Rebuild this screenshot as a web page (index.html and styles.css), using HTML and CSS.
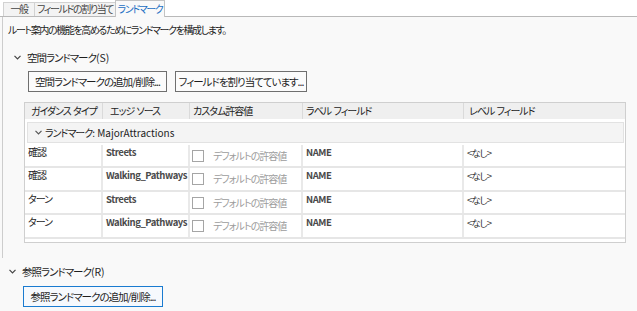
FILE: index.html
```html
<!DOCTYPE html>
<html lang="ja">
<head>
    <meta charset="UTF-8">
    <title>ランドマーク</title>
    <link rel="stylesheet" href="styles.css">
</head>
<body>

    <!-- Tab strip -->
    <div class="tabs">
        <div class="tab tab-general">一般</div>
        <div class="tab tab-fields">フィールドの割り当て</div>
        <div class="tab tab-landmark active">ランドマーク</div>
    </div>

    <!-- Spatial landmarks -->
    <div class="panel">
        <p class="desc">ルート案内の機能を高めるためにランドマークを構成します。</p>

        <div class="section-head">
            <svg class="chev" width="7" height="5" viewBox="0 0 7 5"><path d="M0.5 0.8 L3.5 3.8 L6.5 0.8" fill="none" stroke="#444" stroke-width="1.2"/></svg>
            <span>空間ランドマーク<span class="latin">(S)</span></span>
        </div>

        <div class="btn-row">
            <button class="btn btn-add">空間ランドマークの追加/削除...</button>
            <button class="btn btn-assign">フィールドを割り当てています...</button>
        </div>

        <div class="grid">
            <div class="grid-head">
                <div class="hcell">ガイダンス タイプ</div>
                <div class="hcell">エッジ ソース</div>
                <div class="hcell">カスタム許容値</div>
                <div class="hcell">ラベル フィールド</div>
                <div class="hcell">レベル フィールド</div>
            </div>

            <div class="group-row">
                <svg class="chev" width="7" height="5" viewBox="0 0 7 5"><path d="M0.5 0.8 L3.5 3.8 L6.5 0.8" fill="none" stroke="#555" stroke-width="1.2"/></svg>
                <span>ランドマーク<span class="latin">: MajorAttractions</span></span>
            </div>

            <div class="grid-row">
                <div class="cell">確認</div>
                <div class="cell strong latin">Streets</div>
                <div class="cell check-cell"><span class="checkbox"></span><span class="muted">デフォルトの許容値</span></div>
                <div class="cell strong latin">NAME</div>
                <div class="cell small">&lt;なし&gt;</div>
            </div>
            <div class="grid-row tall">
                <div class="cell">確認</div>
                <div class="cell strong latin">Walking_Pathways</div>
                <div class="cell check-cell"><span class="checkbox"></span><span class="muted">デフォルトの許容値</span></div>
                <div class="cell strong latin">NAME</div>
                <div class="cell small">&lt;なし&gt;</div>
            </div>
            <div class="grid-row">
                <div class="cell">ターン</div>
                <div class="cell strong latin">Streets</div>
                <div class="cell check-cell"><span class="checkbox"></span><span class="muted">デフォルトの許容値</span></div>
                <div class="cell strong latin">NAME</div>
                <div class="cell small">&lt;なし&gt;</div>
            </div>
            <div class="grid-row tall">
                <div class="cell">ターン</div>
                <div class="cell strong latin">Walking_Pathways</div>
                <div class="cell check-cell"><span class="checkbox"></span><span class="muted">デフォルトの許容値</span></div>
                <div class="cell strong latin">NAME</div>
                <div class="cell small">&lt;なし&gt;</div>
            </div>
        </div>
    </div>

    <!-- Reference landmarks -->
    <div class="section-ref">
        <div class="section-head">
            <svg class="chev" width="7" height="5" viewBox="0 0 7 5"><path d="M0.5 0.8 L3.5 3.8 L6.5 0.8" fill="none" stroke="#444" stroke-width="1.2"/></svg>
            <span>参照ランドマーク<span class="latin">(R)</span></span>
        </div>
        <div class="btn-row">
            <button class="btn btn-ref focused">参照ランドマークの追加/削除...</button>
        </div>
    </div>

</body>
</html>
```

FILE: styles.css
```css
body {
    margin: 0;
    padding: 0;
    font-family: "Noto Sans CJK JP", "Noto Sans", sans-serif;
    font-feature-settings: "palt";
    font-size: 10px;
    letter-spacing: -1px;
    word-spacing: 1px;
    white-space: nowrap;
    color: #1e1e1e;
    background-color: #f9f9f9;
    height: 311px;
    overflow: hidden;
}

.latin {
    letter-spacing: 0;
    word-spacing: 0;
}

/* Tabs */
.tabs {
    display: flex;
    align-items: flex-end;
    height: 16px;
    padding-left: 3px;
    background-color: #ffffff;
    border-bottom: 1px solid #b9b9b9;
}

.tab {
    box-sizing: border-box;
    height: 14px;
    line-height: 12px;
    text-align: center;
    letter-spacing: -1.4px;
    color: #444;
    background-color: #f3f3f3;
    border: 1px solid #d2d2d2;
    border-right: none;
    border-bottom: none;
}

.tab-general { width: 31px; }
.tab-fields { width: 81px; }
.tab-landmark { width: 50px; }

.tab.active {
    height: 17px;
    line-height: 15px;
    margin-bottom: -1px;
    color: #1b6ec2;
    background-color: #f9f9f9;
    border-color: #c4c4c4;
    border-right: 1px solid #c4c4c4;
}

/* Panel */
.panel {
    margin-left: 2px;
    padding: 5px 0 15px 0;
    border-left: 1px solid #cdcdcd;
}

.desc {
    margin: 0 0 0 5px;
    line-height: 16px;
    letter-spacing: -1.4px;
}

.section-head {
    display: flex;
    align-items: center;
    height: 16px;
    margin-top: 11px;
    padding-left: 11px;
    font-size: 10.5px;
}

.section-head .chev {
    margin-right: 6px;
}

.btn-row {
    display: flex;
    gap: 8px;
    margin-top: 6px;
    padding-left: 25px;
}

.btn {
    box-sizing: border-box;
    height: 21px;
    padding: 0;
    font-family: inherit;
    font-feature-settings: "palt";
    font-size: 10.5px;
    letter-spacing: -1px;
    white-space: nowrap;
    color: #1e1e1e;
    background-color: #fbfbfb;
    border: 1px solid #6f6f6f;
}

.btn-add { width: 139px; }
.btn-assign { width: 132px; }
.btn-ref { width: 140px; }

.btn.focused {
    border-color: #1a7bd0;
    background-color: #f6f9fd;
}

/* Grid */
.grid {
    box-sizing: border-box;
    width: 602px;
    margin: 10px 0 0 21px;
    padding-bottom: 3px;
    background-color: #ffffff;
    border: 1px solid #cfcfcf;
}

.grid-head,
.grid-row {
    display: grid;
    grid-template-columns: 78px 87px 113px 161px 1fr;
}

.grid-head {
    height: 16px;
    background-color: #efefef;
}

.hcell {
    padding-left: 5px;
    line-height: 16px;
    color: #222;
    border-right: 1px solid #dadada;
}

.hcell:first-child { padding-left: 6px; }
.hcell:nth-child(2) { padding-left: 7px; }
.hcell:nth-child(3) { padding-left: 3px; }
.hcell:nth-child(4) { padding-left: 3px; }
.hcell:last-child { border-right: none; }

.group-row {
    display: flex;
    align-items: center;
    box-sizing: border-box;
    height: 21px;
    margin: 3px 1px 2px 2px;
    padding-left: 7px;
    background-color: #f4f4f4;
    border: 1px solid #e2e2e2;
}

.group-row .chev {
    margin-right: 3px;
}

.grid-row {
    box-sizing: border-box;
    height: 23px;
    border-bottom: 2px solid #e6e6e6;
}

.grid-row.tall {
    height: 24px;
}

.cell {
    padding-left: 3px;
    line-height: 14px;
    border-right: 2px solid #e9e9e9;
}

.cell:last-child { border-right: none; }

.strong {
    font-weight: 600;
    font-size: 9.5px;
    letter-spacing: -0.45px;
    color: #4a4a4a;
}

.small {
    font-size: 9.5px;
    color: #333;
    padding-top: 1px;
}

.check-cell {
    display: flex;
    align-items: center;
    padding-left: 2px;
}

.checkbox {
    box-sizing: border-box;
    width: 12px;
    height: 12px;
    margin-right: 9px;
    background-color: #fff;
    border: 1px solid #a5a5a5;
}

.muted {
    color: #9c9c9c;
}

/* Reference landmarks */
.section-ref .section-head {
    margin-top: 5px;
    padding-left: 9px;
}

.section-ref .btn-row {
    margin-top: 7px;
    padding-left: 23px;
}
```
